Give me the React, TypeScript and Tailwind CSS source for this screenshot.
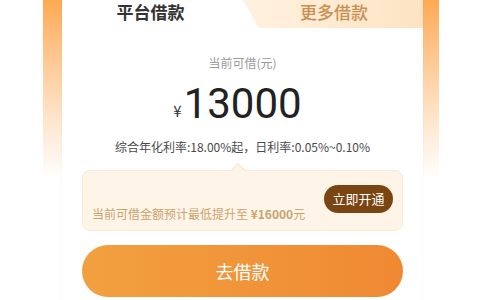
const cjk = { fontFamily: '"Noto Sans CJK SC", "Noto Sans", sans-serif' };

export default function App() {
  return (
    <div className="h-[300px] w-[480px] overflow-hidden bg-white" style={cjk}>
      {/* orange frame fading to white */}
      <div className="ml-[43px] h-full w-[396px] bg-gradient-to-b from-[#ffa952] via-[#fde6cc] via-40% to-white to-60% pl-[19px] pr-[16px]">
        <div className="flex h-full flex-col bg-white shadow-[0_0_2px_rgba(0,0,0,0.06)]">
          {/* tabs */}
          <div className="flex h-[28px]">
            <div className="flex flex-1 items-center justify-center pr-[4px] pb-[4px] text-[17px] font-bold text-[#333]">
              平台借款
            </div>
            <div className="flex w-[180px] items-center justify-center bg-gradient-to-r from-[#fff1e0] to-[#fde3c2] pl-[2px] pb-[4px] text-[17px] font-medium text-[#c98f52] [clip-path:polygon(0_0,100%_0,100%_100%,16px_100%)]">
              更多借款
            </div>
          </div>

          <div className="mt-[27px] text-center text-[12px] leading-[16px] text-[#9a9a9a]">当前可借(元)</div>

          <div className="mt-[11px] flex items-end justify-center pr-[10px] text-[#222]">
            <span className="mb-[8px] mr-[2px] text-[15px] leading-none text-[#333]">¥</span>
            <span className="text-[42px] leading-[44px]" style={{ fontFamily: 'Roboto, sans-serif' }}>
              13000
            </span>
          </div>

          <div className="mt-[13px] text-center text-[12px] leading-[16px] text-[#4a4a4a]">
            综合年化利率:18.00%起，日利率:0.05%~0.10%
          </div>

          {/* upgrade tip */}
          <div className="relative mx-[20px] mt-[15px] flex h-[61px] items-end justify-between rounded-[8px] border border-[#fbe9d2] bg-[#fef4e7] pb-[8px] pl-[9px] pr-[9px]">
            <div className="absolute -top-[6px] left-[150px] h-[10px] w-[10px] rotate-45 border-l border-t border-[#fbe9d2] bg-[#fef4e7]" />
            <div className="text-[12px] leading-[16px] text-[#c9a36e]">
              当前可借金额预计最低提升至 <span className="font-bold">¥16000</span>元
            </div>
            <div className="mb-[9px] flex h-[28px] w-[69px] items-center justify-center rounded-full bg-[#7a4511] text-[13px] text-white">
              立即开通
            </div>
          </div>

          <div className="mx-[20px] mt-[14px] flex h-[52px] items-center justify-center rounded-full bg-gradient-to-r from-[#f2a03f] to-[#ef8933] text-[18px] text-white">
            去借款
          </div>
        </div>
      </div>
    </div>
  );
}
